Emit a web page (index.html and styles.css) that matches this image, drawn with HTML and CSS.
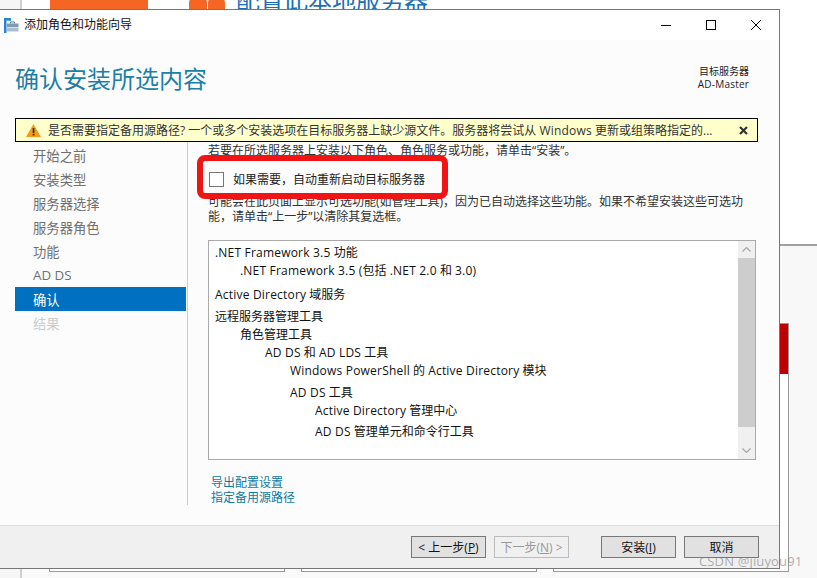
FILE: index.html
```html
<!DOCTYPE html>
<html lang="zh-CN">
<head>
<meta charset="utf-8">
<title>添加角色和功能向导</title>
<link rel="stylesheet" href="styles.css">
</head>
<body>
<div class="desktop">
  <div class="bg-strip"></div>
  <div class="bg-rail"></div>
  <div class="bg-orange"></div>
  <div class="bg-dot bg-dot-a"></div>
  <div class="bg-dot bg-dot-b"></div>
  <div class="bg-heading">配置此本地服务器</div>
  <div class="bg-panel"></div>
  <div class="bg-card bg-card-1"></div>
  <div class="bg-card bg-card-2"></div>
  <div class="bg-card bg-card-3"><div class="bg-card-head"></div></div>

  <section class="wizard">
    <header class="titlebar">
      <svg class="app-icon" width="15" height="15" viewBox="0 0 15 15">
        <path d="M0 0h7v2.500H2.500V15H0z" fill="#2a84d2"/>
        <rect x="3.500" y="0" width="3.500" height="2.500" fill="#2a84d2"/>
        <path d="M6.500 5.500V4h4v1.500" fill="none" stroke="#5b7f95" stroke-width="1"/>
        <rect x="3" y="5.500" width="11.500" height="3.500" fill="#7f9db2"/>
        <rect x="3" y="9.500" width="11.500" height="4" fill="#a9bfce"/>
      </svg>
      <span class="title-text">添加角色和功能向导</span>
      <div class="controls">
        <svg width="10" height="10" viewBox="0 0 10 10"><path d="M0 5.500h10" stroke="#000" fill="none"/></svg>
        <svg width="10" height="10" viewBox="0 0 10 10"><rect x=".5" y=".5" width="9" height="9" stroke="#000" fill="none"/></svg>
        <svg width="10" height="10" viewBox="0 0 10 10"><path d="M0 0l10 10M10 0L0 10" stroke="#000" fill="none"/></svg>
      </div>
    </header>

    <div class="head">
      <h1 class="page-title">确认安装所选内容</h1>
      <div class="server">
        <div>目标服务器</div>
        <div class="lat">AD-Master</div>
      </div>
    </div>

    <div class="banner">
      <svg class="warn" width="15" height="13" viewBox="0 0 15 13">
        <path d="M7.500 0L15 13H0z" fill="#f49a1f"/>
        <rect x="6.700" y="4" width="1.700" height="5" fill="#3a2a10"/>
        <rect x="6.700" y="9.800" width="1.700" height="1.700" fill="#3a2a10"/>
      </svg>
      <span class="banner-text">是否需要指定备用源路径? 一个或多个安装选项在目标服务器上缺少源文件。服务器将尝试从 <span class="lat">Windows</span> 更新或组策略指定的...</span>
      <svg class="banner-x" width="9" height="9" viewBox="0 0 9 9"><path d="M1 1l7 7M8 1L1 8" stroke="#333" stroke-width="2.200" fill="none"/></svg>
    </div>

    <div class="body">
      <nav class="nav">
        <div class="nav-item">开始之前</div>
        <div class="nav-item">安装类型</div>
        <div class="nav-item">服务器选择</div>
        <div class="nav-item">服务器角色</div>
        <div class="nav-item">功能</div>
        <div class="nav-item is-latin">AD DS</div>
        <div class="nav-item is-active">确认</div>
        <div class="nav-item is-disabled">结果</div>
      </nav>
      <div class="divider"></div>
      <main class="main">
        <p class="intro">若要在所选服务器上安装以下角色、角色服务或功能，请单击“安装”。</p>
        <label class="restart">
          <span class="checkbox"></span>
          <span>如果需要，自动重新启动目标服务器</span>
        </label>
        <p class="note">可能会在此页面上显示可选功能(如管理工具)，因为已自动选择这些功能。如果不希望安装这些可选功能，请单击“上一步”以清除其复选框。</p>
        <div class="listbox">
          <div class="list">
            <div class="row l0"><span class="lat">.NET Framework 3.5</span> 功能</div>
            <div class="row l1"><span class="lat">.NET Framework 3.5 (</span>包括 <span class="lat">.NET 2.0</span> 和 <span class="lat">3.0)</span></div>
            <div class="row l0 gap-a"><span class="lat">Active Directory</span> 域服务</div>
            <div class="row l0 gap-b">远程服务器管理工具</div>
            <div class="row l1">角色管理工具</div>
            <div class="row l2"><span class="lat">AD DS</span> 和 <span class="lat">AD LDS</span> 工具</div>
            <div class="row l3"><span class="lat">Windows PowerShell</span> 的 <span class="lat">Active Directory</span> 模块</div>
            <div class="row l3 gap-c"><span class="lat">AD DS</span> 工具</div>
            <div class="row l4"><span class="lat">Active Directory</span> 管理中心</div>
            <div class="row l4 gap-d"><span class="lat">AD DS</span> 管理单元和命令行工具</div>
          </div>
          <div class="scrollbar">
            <div class="sb-btn sb-up">
              <svg width="9" height="5" viewBox="0 0 9 5"><path d="M.5 4.500l4-4 4 4" stroke="#a6a6a6" stroke-width="1.200" fill="none"/></svg>
            </div>
            <div class="sb-thumb"></div>
            <div class="sb-btn sb-down">
              <svg width="9" height="5" viewBox="0 0 9 5"><path d="M.5 .5l4 4 4-4" stroke="#a6a6a6" stroke-width="1.200" fill="none"/></svg>
            </div>
          </div>
        </div>
        <div class="links">
          <a class="link">导出配置设置</a>
          <a class="link">指定备用源路径</a>
        </div>
      </main>
    </div>

    <footer class="footer">
      <button class="btn">&lt; 上一步(<u>P</u>)</button>
      <button class="btn is-off">下一步(<u>N</u>) &gt;</button>
      <button class="btn btn-install">安装(<u>I</u>)</button>
      <button class="btn">取消</button>
    </footer>
  </section>

  <div class="annotation"></div>
  <div class="watermark">CSDN @jiuyou91</div>
</div>
</body>
</html>
```

FILE: styles.css
```css
* { box-sizing: border-box; }
html, body { margin: 0; padding: 0; }
body { font-family: "Open Sans", "Noto Sans CJK SC", sans-serif; font-size: 12px; color: #222; background: #fff; }

.lat { letter-spacing: .2px; }

.desktop { position: relative; width: 817px; height: 578px; overflow: hidden; background: #fff; }

/* window content behind the wizard */
.bg-rail { position: absolute; left: 0; top: 568px; width: 817px; height: 10px; background: #fafafa; }
.bg-strip { position: absolute; left: 0; top: 0; z-index: 1; width: 22px; height: 578px; background: #f6f6f6; border-right: 2px solid #d0d0d0; }
.bg-orange { position: absolute; left: 50px; top: 0; width: 98px; height: 10px; background: #f56624; }
.bg-dot { position: absolute; top: -4px; width: 18px; height: 14px; background: #f56624; border-radius: 7px 7px 0 0; }
.bg-dot-a { left: 189px; }
.bg-dot-b { left: 208px; width: 17px; }
.bg-heading { position: absolute; left: 236px; top: -17px; font-size: 24px; line-height: 34px; color: #1a6fb5; white-space: nowrap; }
.bg-panel { position: absolute; left: 780px; top: 244px; width: 37px; height: 334px; background: #f8f8f8; border-top: 2px solid #a0a0a0; }
.bg-card { position: absolute; top: 323px; width: 236px; height: 249px; background: #fff; border: 1px solid #999; }
.bg-card-1 { left: 49px; }
.bg-card-2 { left: 301px; }
.bg-card-3 { left: 553px; }
.bg-card-head { height: 50px; background: #c00000; }

/* wizard window */
.wizard { position: absolute; left: 0; top: 9px; z-index: 2; width: 780px; height: 560px; display: flex; flex-direction: column; background: #fcfcfc; border-top: 1px solid #777; border-right: 1px solid #777; border-bottom: 1px solid #777; }

.titlebar { flex: none; height: 30px; display: flex; align-items: center; padding-left: 4px; background: #fff; }
.title-text { margin-left: 5px; color: #111; line-height: 16px; }
.controls { margin-left: auto; display: flex; gap: 35px; padding-right: 18px; }
.controls svg { display: block; }

.head { flex: none; height: 78px; display: flex; justify-content: space-between; padding: 0 30px 0 15px; }
.page-title { margin: 22px 0 0; font-size: 24px; font-weight: 400; line-height: 34px; color: #1b7fa6; }
.server { margin-top: 25px; text-align: right; font-size: 10px; line-height: 13px; color: #222; }

.banner { flex: none; width: 743px; height: 24px; margin-left: 15px; display: flex; align-items: center; padding-left: 10px; background: #ffffcc; border: 1px solid #000; }
.banner-text { margin-left: 7px; white-space: nowrap; color: #333; }
.banner-x { margin-left: auto; margin-right: 9px; }

.body { flex: 1; display: flex; min-height: 0; }
.nav { flex: none; width: 172px; margin-left: 15px; padding-top: 1px; font-size: 13.330px; }
.nav-item { height: 24px; line-height: 26px; padding-left: 18px; color: #707070; }
.nav-item.is-latin { line-height: 24px; }
.nav-item.is-active { background: #0070c0; color: #fff; width: 171px; }
.nav-item.is-disabled { color: #ccc; }
.divider { flex: none; width: 1px; height: 363px; background: #ccc; }
.main { flex: 1; padding-left: 20px; min-width: 0; }

.intro { margin: 1px 0 0; line-height: 15px; color: #333; }
.restart { display: flex; align-items: center; height: 20px; margin-top: 11px; padding-left: 1px; color: #222; }
.checkbox { width: 15px; height: 15px; margin-right: 9px; background: #fff; border: 1px solid #777; }
.note { width: 540px; margin: 5px 0 0; line-height: 15px; color: #333; }

.listbox { width: 548px; height: 220px; margin-top: 16px; display: flex; background: #fff; border: 1px solid #aaa; }
.list { flex: 1; padding: 3px 0 0 6px; color: #111; }
.row { height: 18px; line-height: 18px; white-space: nowrap; }
.l1 { padding-left: 25px; }
.l2 { padding-left: 50px; }
.l3 { padding-left: 75px; }
.l4 { padding-left: 100px; }
.gap-a { margin-top: 6px; }
.gap-b { margin-top: 4px; }
.gap-c { margin-top: 4px; }
.gap-d { margin-top: 3px; }
.scrollbar { flex: none; width: 17px; display: flex; flex-direction: column; background: #f0f0f0; }
.sb-btn { flex: none; display: flex; justify-content: center; }
.sb-up { height: 17px; align-items: center; }
.sb-thumb { flex: none; height: 169px; background: #cdcdcd; }
.sb-down { flex: 1; align-items: flex-end; padding-bottom: 6px; }

.links { margin: 15px 0 0 3px; display: flex; flex-direction: column; line-height: 15px; }
.link { color: #0f7aa3; }

.footer { flex: none; height: 43px; display: flex; align-items: center; padding: 0 20px 0 411px; background: #f0f0f0; border-top: 1px solid #ddd; }
.btn { width: 75px; height: 22px; margin: 0 8px 0 0; padding: 0; background: #e1e1e1; border: 1px solid #777; border-radius: 0; font: inherit; color: #111; }
.btn.is-off { background: #f0f0f0; border-color: #bbb; color: #999; }
.btn-install { margin-left: 24px; }
.btn:last-child { margin-right: 0; }

.annotation { position: absolute; left: 197px; top: 155px; z-index: 3; width: 251px; height: 44px; border: 6px solid #f01414; border-radius: 8px; }
.watermark { position: absolute; left: 699px; top: 552px; z-index: 3; font-size: 13px; line-height: 18px; letter-spacing: .15px; color: rgba(120,120,120,.6); white-space: nowrap; }
```
